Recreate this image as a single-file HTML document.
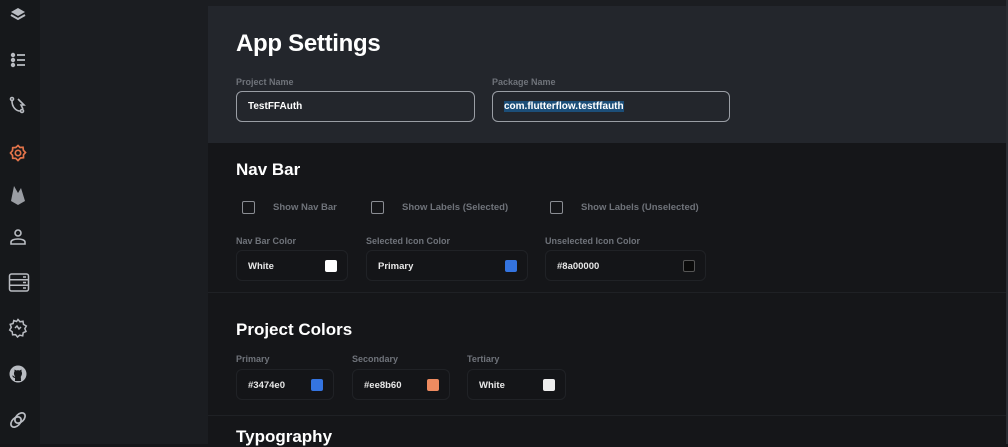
<!DOCTYPE html>
<html><head><style>
*{margin:0;padding:0;box-sizing:border-box}
body{width:1008px;height:444px;overflow:hidden;background:#151619;font-family:"Liberation Sans",sans-serif;position:relative}
.sb{position:absolute;left:0;top:0;width:40px;height:444px;background:#16181b}
.mid{position:absolute;left:40px;top:0;width:168px;height:444px;background:#1b1d21}
.hdr{position:absolute;left:208px;top:6px;width:798px;height:137px;background:#23262c}
.topstrip{position:absolute;left:208px;top:0;width:800px;height:6px;background:#1b1d21}
.main{position:absolute;left:208px;top:143px;width:798px;height:301px;background:#151619}
.edge{position:absolute;left:1006px;top:0;width:2px;height:444px;background:#2a2d33}
.t{position:absolute;color:#fff;font-weight:bold}
.lbl{position:absolute;color:#6f737a;font-size:9px;font-weight:bold}
.inp{position:absolute;border:1.5px solid #9a9ea5;border-radius:6px;height:31px;color:#fff;font-size:10px;font-weight:bold;padding:9px 11px}
.cb{position:absolute;width:13px;height:13px;border:1.5px solid #8a8d93;border-radius:2px}
.cbl{position:absolute;color:#6f737a;font-size:9.5px;font-weight:bold}
.box{position:absolute;border:1px solid #202226;border-radius:6px;height:31px;background:#141518;color:#e8e8e8;font-size:9.5px;font-weight:bold;padding:10px 11px}
.sw{position:absolute;right:10px;top:9px;width:12px;height:12px;border-radius:2px}
.hr{position:absolute;left:208px;width:798px;height:1px;background:#1f2125}
svg{position:absolute;left:8px}
</style></head><body>
<div class="sb"></div><div class="mid"></div><div class="topstrip"></div><div class="hdr"></div><div class="main"></div><div class="edge"></div>
<div class="hr" style="top:292px"></div><div class="hr" style="top:415px"></div>

<svg style="top:5px" width="20" height="20" viewBox="0 0 20 20"><path d="M10 3L17 7L10 11L3 7Z" fill="#b9bcc2"/><path d="M3 10L10 14L17 10" stroke="#b9bcc2" stroke-width="2" fill="none"/></svg>
<svg style="top:50px" width="20" height="20" viewBox="0 0 20 20" stroke="#b9bcc2" stroke-width="1.8" fill="#b9bcc2"><circle cx="5" cy="5" r="1.3"/><circle cx="5" cy="10" r="1.3"/><circle cx="5" cy="15" r="1.3"/><path d="M9 5H17M9 10H17M9 15H17"/></svg>
<svg style="top:95px" width="20" height="20" viewBox="0 0 20 20" stroke="#b9bcc2" stroke-width="1.6" fill="none"><circle cx="4" cy="4" r="1.5"/><circle cx="14" cy="16" r="1.5"/><path d="M4 6C4 12 8 16 12 16M10 4L16 10L13 10L15 14"/></svg>
<svg style="top:143px" width="20" height="20" viewBox="0 0 20 20" stroke="#e4744a" stroke-width="1.7" fill="none"><path d="M10 2.5L12 4.5L15 4.3L15.4 7.3L17.5 9.5L15.5 11.7L15.5 14.7L12.5 15L10 17.5L7.7 15.3L4.7 15.3L4.5 12.3L2.5 10L4.5 7.7L4.7 4.7L7.7 4.5Z"/><circle cx="10" cy="10" r="2.7"/></svg>
<svg style="top:184px" width="20" height="22" viewBox="0 0 20 22" fill="#9a9da3"><path d="M3 17L6 2L10 9L13 4L17 17L10 21Z"/></svg>
<svg style="top:227px" width="20" height="20" viewBox="0 0 20 20" stroke="#b9bcc2" stroke-width="1.6" fill="none"><circle cx="10" cy="6" r="3"/><path d="M3 15C3 11 17 11 17 15V17H3Z"/></svg>
<svg style="top:271px" width="22" height="22" viewBox="0 0 22 22" stroke="#b9bcc2" stroke-width="1.5" fill="none" style="left:7px"><rect x="1.5" y="3" width="19" height="17" rx="2"/><path d="M1.5 8.7H20.5M1.5 14.3H20.5M15 6H18M15 11.5H18M15 17H18"/></svg>
<svg style="top:318px" width="20" height="20" viewBox="0 0 20 20" stroke="#b9bcc2" stroke-width="1.5" fill="none"><path d="M10 1.5L12 3.8L15 3.3L15.5 6.4L18.3 8L16.8 10.7L18 13.5L15.2 14.7L14.7 17.8L11.7 17.2L9.5 19L7.6 16.6L4.6 16.8L4.2 13.8L1.7 12L3.3 9.3L2.2 6.4L5.1 5.5L5.8 2.5L8.6 3.5Z"/><path d="M7 10L9 8L11 11L13 9"/></svg>
<svg style="top:364px" width="20" height="20" viewBox="0 0 20 20"><circle cx="10" cy="10" r="8.5" fill="#b9bcc2"/><path d="M7 17V14C5 14 4.5 12 4 11.5C6 11.5 6 13 7.3 13C6 11 5.5 9 6.5 7.5L6.5 5.5L8.5 6.5C9.5 6.2 10.5 6.2 11.5 6.5L13.5 5.5L13.5 7.5C14.5 9 14 11 12.7 13C13 13.5 13 14.5 13 17Z" fill="#16181b"/></svg>
<svg style="top:410px" width="20" height="20" viewBox="0 0 20 20" stroke="#b9bcc2" stroke-width="1.7" fill="none"><ellipse cx="8" cy="12" rx="6" ry="4" transform="rotate(-45 8 12)"/><ellipse cx="12" cy="8" rx="6" ry="4" transform="rotate(-45 12 8)"/></svg>

<div class="t" style="left:236px;top:30px;font-size:24px;letter-spacing:-0.3px">App Settings</div>
<div class="lbl" style="left:236px;top:77px">Project Name</div>
<div class="lbl" style="left:492px;top:77px">Package Name</div>
<div class="inp" style="left:236px;top:91px;width:239px">TestFFAuth</div>
<div class="inp" style="left:492px;top:91px;width:238px"><span style="background:#1c4e78">com.flutterflow.testffauth</span></div>

<div class="t" style="left:236px;top:160px;font-size:17px">Nav Bar</div>
<div class="cb" style="left:242px;top:201px"></div><div class="cbl" style="left:273px;top:202px">Show Nav Bar</div>
<div class="cb" style="left:371px;top:201px"></div><div class="cbl" style="left:402px;top:202px">Show Labels (Selected)</div>
<div class="cb" style="left:550px;top:201px"></div><div class="cbl" style="left:581px;top:202px">Show Labels (Unselected)</div>
<div class="lbl" style="left:236px;top:236px">Nav Bar Color</div>
<div class="lbl" style="left:366px;top:236px">Selected Icon Color</div>
<div class="lbl" style="left:545px;top:236px">Unselected Icon Color</div>
<div class="box" style="left:236px;top:250px;width:112px">White<div class="sw" style="background:#fff"></div></div>
<div class="box" style="left:366px;top:250px;width:162px">Primary<div class="sw" style="background:#3474e0"></div></div>
<div class="box" style="left:545px;top:250px;width:161px">#8a00000<div class="sw" style="background:#0a0a0a;border:1px solid #555"></div></div>

<div class="t" style="left:236px;top:320px;font-size:17px">Project Colors</div>
<div class="lbl" style="left:236px;top:354px">Primary</div>
<div class="lbl" style="left:352px;top:354px">Secondary</div>
<div class="lbl" style="left:467px;top:354px">Tertiary</div>
<div class="box" style="left:236px;top:369px;width:98px">#3474e0<div class="sw" style="background:#3474e0"></div></div>
<div class="box" style="left:352px;top:369px;width:98px">#ee8b60<div class="sw" style="background:#ee8b60"></div></div>
<div class="box" style="left:467px;top:369px;width:99px">White<div class="sw" style="background:#eee"></div></div>
<div class="t" style="left:236px;top:427px;font-size:17px">Typography</div>
</body></html>
